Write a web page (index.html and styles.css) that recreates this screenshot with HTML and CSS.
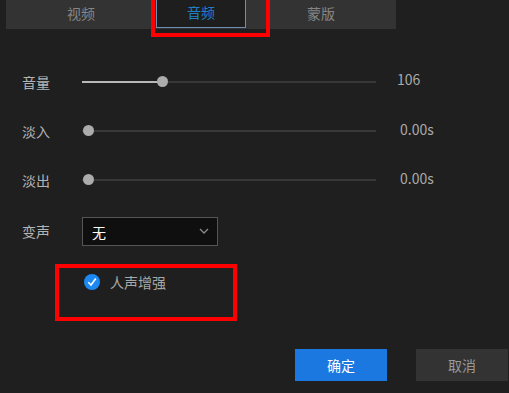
FILE: index.html
```html
<!DOCTYPE html>
<html lang="zh">
<head>
<meta charset="utf-8">
<link rel="stylesheet" href="styles.css">
</head>
<body>
<div class="page">
  <div class="tabs">
    <div class="tab">视频</div>
    <div class="tab active"><span class="tab-inner">音频</span></div>
    <div class="tab">蒙版</div>
  </div>
  <div class="mark mark-tab"></div>

  <div class="form">
    <div class="row">
      <div class="label">音量</div>
      <div class="slider">
        <div class="fill" style="width:80px"></div>
        <div class="thumb" style="left:80px"></div>
      </div>
      <div class="value">106</div>
    </div>
    <div class="row">
      <div class="label">淡入</div>
      <div class="slider">
        <div class="thumb" style="left:6px"></div>
      </div>
      <div class="value value-s">0.00s</div>
    </div>
    <div class="row">
      <div class="label">淡出</div>
      <div class="slider">
        <div class="thumb" style="left:6px"></div>
      </div>
      <div class="value value-s">0.00s</div>
    </div>
    <div class="row-select">
      <div class="label">变声</div>
      <div class="select">
        <span class="select-text">无</span>
        <svg class="chev" width="10" height="6" viewBox="0 0 10 6"><path d="M1 1 L5 5 L9 1" fill="none" stroke="#8a8a8a" stroke-width="1.3"/></svg>
      </div>
    </div>
    <div class="row-check">
      <span class="check">
        <svg width="16" height="16" viewBox="0 0 16 16"><circle cx="8" cy="8" r="8" fill="#1c89f2"/><path d="M4.3 8.2 L7 11 L11.8 4.6" fill="none" stroke="#fff" stroke-width="1.6"/></svg>
      </span>
      <span class="check-text">人声增强</span>
    </div>
    <div class="mark mark-check"></div>
    <div class="buttons">
      <button class="btn btn-primary">确定</button>
      <button class="btn btn-secondary">取消</button>
    </div>
  </div>
</div>
</body>
</html>
```
FILE: styles.css
```css
* { box-sizing: border-box; }
html, body {
  margin: 0;
  padding: 0;
  background: #1f1f1f;
  width: 509px;
  height: 393px;
  overflow: hidden;
  font-family: "Noto Sans CJK SC", "Noto Sans", sans-serif;
}
.page {
  position: relative;
  width: 509px;
  height: 393px;
}
.tabs {
  margin-left: 6px;
  width: 390px;
  height: 29px;
  background: #333333;
  display: flex;
  padding-left: 15px;
}
.tab {
  width: 120px;
  height: 29px;
  display: flex;
  align-items: center;
  justify-content: center;
  color: #858585;
  font-size: 14px;
  line-height: 1;
  padding-bottom: 3px;
}
.tab.active {
  align-items: flex-start;
  padding-bottom: 0;
}
.tab-inner {
  width: 90px;
  height: 28px;
  background: #1e1e1e;
  border: 1px solid #6e8fb3;
  border-top: none;
  color: #1f80c8;
  display: flex;
  align-items: center;
  justify-content: center;
  padding-bottom: 3px;
}
.mark {
  position: absolute;
  border: 4px solid #ff0000;
}
.mark-tab {
  left: 151px;
  top: -4px;
  width: 119px;
  height: 41px;
}
.mark-check {
  left: 55px;
  top: 264px;
  width: 182px;
  height: 57px;
}
.form {
  padding-left: 22px;
  padding-top: 28px;
}
.row {
  height: 49px;
  display: flex;
  align-items: center;
}
.label {
  width: 60px;
  color: #b4b4b4;
  font-size: 14px;
  line-height: 1;
  padding-top: 1px;
}
.slider {
  position: relative;
  width: 294px;
  height: 2px;
  background: #383838;
}
.fill {
  position: absolute;
  left: 0;
  top: 0;
  height: 2px;
  background: #b8b8b8;
}
.thumb {
  position: absolute;
  top: 1px;
  width: 11px;
  height: 11px;
  margin-left: -5.5px;
  margin-top: -5.5px;
  border-radius: 50%;
  background: #acacac;
}
.value {
  margin-left: 21px;
  color: #aaaaaa;
  font-size: 14px;
  line-height: 1;
  margin-bottom: 5px;
}
.value-s {
  margin-left: 24px;
  margin-bottom: 3px;
}
.row-select {
  margin-top: 13px;
  display: flex;
  align-items: center;
  height: 29px;
}
.row-select .label { padding-bottom: 2px; }
.select {
  width: 136px;
  height: 29px;
  background: #0f0f0f;
  border: 1px solid #555555;
  display: flex;
  align-items: center;
  justify-content: space-between;
  padding: 0 8px 0 9px;
}
.select-text {
  color: #ffffff;
  font-size: 14px;
  line-height: 1;
}
.chev { display: block; margin-top: -2px; }
.row-check {
  margin-top: 28px;
  margin-left: 62px;
  height: 16px;
  display: flex;
  align-items: center;
}
.check { width: 16px; height: 16px; display: block; }
.check svg { display: block; }
.check-text {
  margin-left: 10px;
  color: #a8a8a8;
  font-size: 14px;
  line-height: 1;
}
.buttons {
  margin-top: 59px;
  display: flex;
  justify-content: flex-end;
  gap: 29px;
  padding-right: 1px;
}
.btn {
  width: 92px;
  height: 32px;
  border: none;
  font-family: inherit;
  font-size: 14px;
  padding: 0;
}
.btn-primary { background: #1a78e0; color: #ffffff; }
.btn-secondary { background: #333333; color: #999999; }
```
